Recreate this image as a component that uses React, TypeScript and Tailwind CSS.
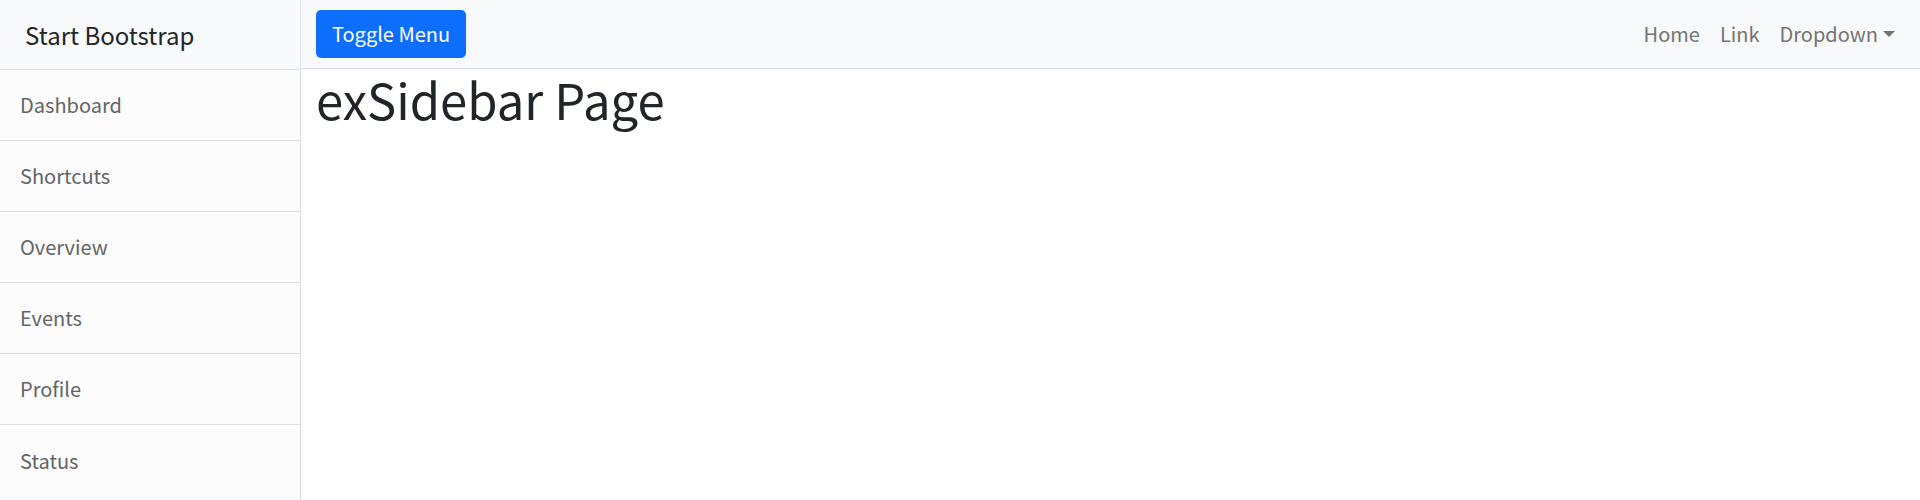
const font = { fontFamily: '"Noto Sans CJK KR", "Noto Sans", sans-serif' };

const items = ['Dashboard', 'Shortcuts', 'Overview', 'Events', 'Profile', 'Status'];

export default function App() {
  return (
    <div className="flex min-h-[500px] bg-white" style={font}>
      {/* sidebar */}
      <div className="w-[301px] shrink-0 border-r border-[#dee2e6] bg-[#f8f9fa]">
        <div className="flex h-[69px] items-center px-[25px] text-[24px] text-[#212529]">
          Start Bootstrap
        </div>
        <div className="border-t border-[#dee2e6]">
          {items.map((item) => (
            <a
              key={item}
              href="#"
              className="flex h-[71px] items-center border-b border-[#dee2e6] bg-[#fcfcfd] px-[20px] text-[20px] text-[#636464] last:border-b-0"
            >
              {item}
            </a>
          ))}
        </div>
      </div>

      {/* page content */}
      <div className="flex-1">
        <nav className="flex h-[69px] items-center justify-between border-b border-[#dee2e6] bg-[#f8f9fa] px-[15px]">
          <button className="h-[48px] rounded-[5px] bg-[#0d6efd] px-[16px] text-[20px] text-white">
            Toggle Menu
          </button>
          <div className="flex items-center text-[20px] text-[#737373]">
            <a href="#" className="px-[10px]">Home</a>
            <a href="#" className="px-[10px]">Link</a>
            <a href="#" className="flex items-center px-[10px]">
              Dropdown
              <span className="ml-[5px] inline-block h-0 w-0 border-x-[6px] border-t-[6px] border-x-transparent border-t-[#737373]" />
            </a>
          </div>
        </nav>
        <div className="px-[15px]">
          <h1 className="text-[49px] leading-[60px] text-[#212529]">exSidebar Page</h1>
        </div>
      </div>
    </div>
  );
}
